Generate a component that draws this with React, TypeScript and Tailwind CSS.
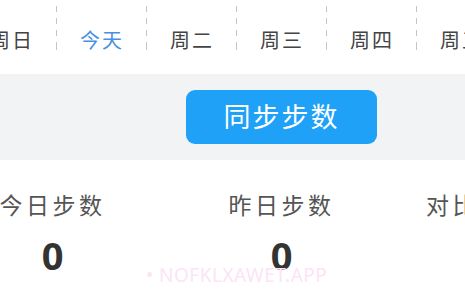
import React from 'react';

const days = ['周日', '今天', '周二', '周三', '周四', '周五'];

const stats = [
  { label: '今日步数', value: '0' },
  { label: '昨日步数', value: '0' },
  { label: '对比昨日步数', value: '' },
];

export default function App() {
  return (
    <div
      className="relative w-[465px] h-[296px] overflow-hidden bg-white"
      style={{ fontFamily: '"Noto Sans", "Noto Sans CJK SC", sans-serif' }}
    >
      {/* Day tabs */}
      <div className="h-[74px] bg-white overflow-hidden">
        <div className="flex ml-[-33px]">
          {days.map((day, i) => (
            <div key={day} className="flex shrink-0">
              <div className="w-[90px] h-[50px] flex justify-center items-start pt-[28px]">
                <span
                  className={`text-[20px] leading-[26px] tracking-[2px] ${
                    i === 1 ? 'text-[#4a90e2]' : 'text-[#444]'
                  }`}
                >
                  {day}
                </span>
              </div>
              <div className="w-px h-[50px] -ml-px bg-[repeating-linear-gradient(to_bottom,#c4c4c4_0_6px,transparent_6px_12px)] bg-[position:0_-6px]" />
            </div>
          ))}
        </div>
      </div>

      {/* Sync button band */}
      <div className="h-[86px] bg-[#f2f3f5] flex items-start pt-[16px] pl-[186px]">
        <button className="w-[191px] h-[54px] rounded-[9px] bg-[#1ea1f7] text-white text-[27px] tracking-[2px] leading-none pb-[2px]">
          同步步数
        </button>
      </div>

      {/* Stats */}
      <div className="flex ml-[-62px] pt-[31px]">
        {stats.map((s, i) => (
          <div
            key={s.label}
            className={`w-[229px] shrink-0 flex flex-col items-center ${i === 2 ? 'pr-[10px]' : ''}`}
          >
            <span className="text-[23px] leading-[28px] tracking-[3.5px] text-[#555] whitespace-nowrap">
              {s.label}
            </span>
            <span
              className="mt-[15px] text-[38px] leading-[42px] font-bold text-[#333]"
              style={{ fontFamily: '"Open Sans", sans-serif' }}
            >
              {s.value}
            </span>
          </div>
        ))}
      </div>

      {/* Watermark */}
      <div className="absolute left-[146px] top-[261px] text-[19px] text-[#fce4f6] tracking-[0.5px] whitespace-nowrap pointer-events-none">
        • NOFKLXAWET.APP
      </div>
    </div>
  );
}
